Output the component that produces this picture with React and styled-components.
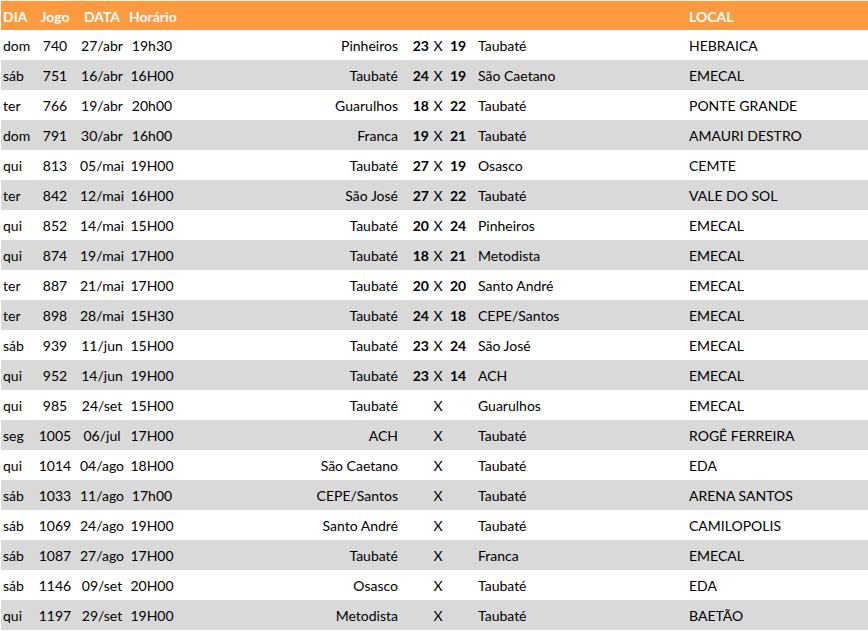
import React from "react"
import styled, { createGlobalStyle } from "styled-components"

const GlobalStyle = createGlobalStyle`
    html, body {
        margin: 0;
        padding: 0;
        background: #ffffff;
    }
    body {
        font-family: Lato, "Open Sans", "Liberation Sans", sans-serif;
        font-size: 14px;
        color: #000000;
    }
`

const Sheet = styled.div`
    width: 868px;
    padding-top: 1px;
`

const Row = styled.div`
    display: grid;
    grid-template-columns: 34px 40px 54px 46px 230px 25px 16px 25px 210px 1fr;
    height: ${(p) => (p.$head ? "29px" : "30px")};
    padding-top: ${(p) => (p.$head ? "2px" : "1px")};
    box-sizing: border-box;
    align-items: center;
    background: ${(p) => (p.$head ? "#fe9a3f" : p.$shade ? "#d9d9d9" : "#ffffff")};
    color: ${(p) => (p.$head ? "#ffffff" : "#000000")};
    font-weight: ${(p) => (p.$head ? 700 : 400)};
    margin-left: 1px;
`

const Cell = styled.div`
    white-space: nowrap;
    text-align: ${(p) => p.$align || "left"};
    padding-left: ${(p) => p.$pl || 0}px;
    padding-right: ${(p) => p.$pr || 0}px;
    font-weight: ${(p) => (p.$bold ? 700 : "inherit")};
`

const games = [
    ["dom", "740", "27/abr", "19h30", "Pinheiros", "23", "19", "Taubaté", "HEBRAICA"],
    ["sáb", "751", "16/abr", "16H00", "Taubaté", "24", "19", "São Caetano", "EMECAL"],
    ["ter", "766", "19/abr", "20h00", "Guarulhos", "18", "22", "Taubaté", "PONTE GRANDE"],
    ["dom", "791", "30/abr", "16h00", "Franca", "19", "21", "Taubaté", "AMAURI DESTRO"],
    ["qui", "813", "05/mai", "19H00", "Taubaté", "27", "19", "Osasco", "CEMTE"],
    ["ter", "842", "12/mai", "16H00", "São José", "27", "22", "Taubaté", "VALE DO SOL"],
    ["qui", "852", "14/mai", "15H00", "Taubaté", "20", "24", "Pinheiros", "EMECAL"],
    ["qui", "874", "19/mai", "17H00", "Taubaté", "18", "21", "Metodista", "EMECAL"],
    ["ter", "887", "21/mai", "17H00", "Taubaté", "20", "20", "Santo André", "EMECAL"],
    ["ter", "898", "28/mai", "15H30", "Taubaté", "24", "18", "CEPE/Santos", "EMECAL"],
    ["sáb", "939", "11/jun", "15H00", "Taubaté", "23", "24", "São José", "EMECAL"],
    ["qui", "952", "14/jun", "19H00", "Taubaté", "23", "14", "ACH", "EMECAL"],
    ["qui", "985", "24/set", "15H00", "Taubaté", "", "", "Guarulhos", "EMECAL"],
    ["seg", "1005", "06/jul", "17H00", "ACH", "", "", "Taubaté", "ROGÊ FERREIRA"],
    ["qui", "1014", "04/ago", "18H00", "São Caetano", "", "", "Taubaté", "EDA"],
    ["sáb", "1033", "11/ago", "17h00", "CEPE/Santos", "", "", "Taubaté", "ARENA SANTOS"],
    ["sáb", "1069", "24/ago", "19H00", "Santo André", "", "", "Taubaté", "CAMILOPOLIS"],
    ["sáb", "1087", "27/ago", "17H00", "Taubaté", "", "", "Franca", "EMECAL"],
    ["sáb", "1146", "09/set", "20H00", "Osasco", "", "", "Taubaté", "EDA"],
    ["qui", "1197", "29/set", "19H00", "Metodista", "", "", "Taubaté", "BAETÃO"],
]

function App() {
    return (
        <>
            <GlobalStyle />
            <Sheet>
                <Row $head>
                    <Cell $pl={2}>DIA</Cell>
                    <Cell $align="center">Jogo</Cell>
                    <Cell $align="center">DATA</Cell>
                    <Cell $align="center">Horário</Cell>
                    <Cell />
                    <Cell />
                    <Cell />
                    <Cell />
                    <Cell />
                    <Cell $pl={8}>LOCAL</Cell>
                </Row>
                {games.map((g, i) => (
                    <Row key={g[1]} $shade={i % 2 === 1}>
                        <Cell $pl={2}>{g[0]}</Cell>
                        <Cell $align="center">{g[1]}</Cell>
                        <Cell $align="center">{g[2]}</Cell>
                        <Cell $align="center">{g[3]}</Cell>
                        <Cell $align="right" $pr={7}>{g[4]}</Cell>
                        <Cell $align="right" $pr={1} $bold>{g[5]}</Cell>
                        <Cell $align="center">X</Cell>
                        <Cell $pl={4} $bold>{g[6]}</Cell>
                        <Cell $pl={7}>{g[7]}</Cell>
                        <Cell $pl={8}>{g[8]}</Cell>
                    </Row>
                ))}
            </Sheet>
        </>
    )
}

export default App
